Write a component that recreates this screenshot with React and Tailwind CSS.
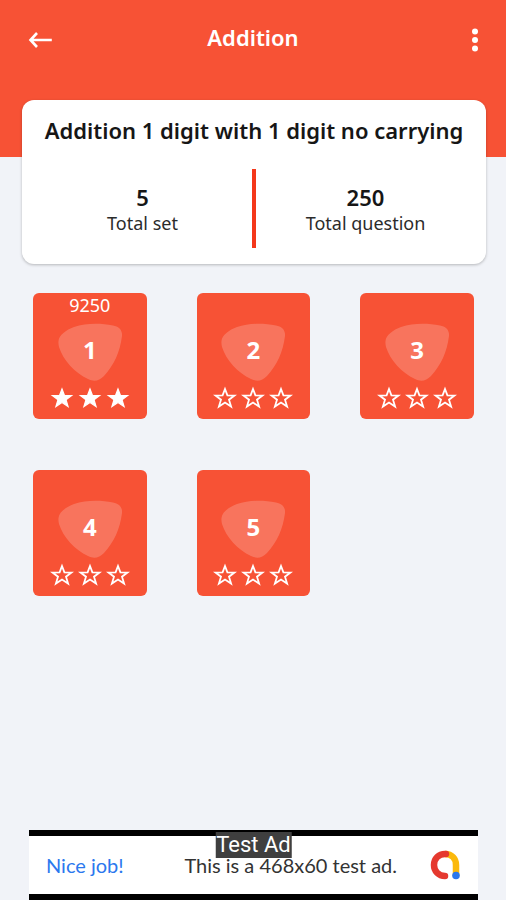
import React from "react";

const STAR_OUTLINE =
  "M12 3 L14.400 9.300 L21.600 9.500 L16 13.700 L18.100 20.600 L12 16.600 L5.900 20.600 L8 13.700 L2.400 9.500 L9.600 9.300 Z";

function Star({ filled }) {
  return (
    <svg viewBox="0 0 24 24" className="size-6" aria-hidden="true">
      <path
        d={STAR_OUTLINE}
        fill={filled ? "#fff" : "none"}
        stroke="#fff"
        strokeWidth={filled ? 1.2 : 1.8}
      />
    </svg>
  );
}

function SetTile({ number, score, stars }) {
  return (
    <button
      type="button"
      className="flex h-[126px] flex-col items-center rounded-md bg-[#f75235] text-white"
    >
      <span className="h-[30px] text-lg leading-6">{score}</span>
      <span className="grid h-[58px] w-16 place-items-center">
        <svg viewBox="0 0 64 58" className="col-start-1 row-start-1 h-[58px] w-16" aria-hidden="true">
          <path
            d="M0.5 18 C1 12 8 7 16 4 C28 0 42 0 55 2.500 C61 3.500 64.500 7 64 13 C62 29 56 42 46 53 C41 58 36 59 30 56 C17 50 5 37 1 24 C0.500 22 0.300 20 0.500 18 Z"
            fill="#fff"
            fillOpacity="0.2"
          />
        </svg>
        <span className="col-start-1 row-start-1 pb-1 text-2xl font-bold">{number}</span>
      </span>
      <span className="flex gap-1 pt-[5px]">
        {[1, 2, 3].map((n) => (
          <Star key={n} filled={n <= stars} />
        ))}
      </span>
    </button>
  );
}

function Stat({ value, label }) {
  return (
    <div className="flex-1 text-center">
      <dd className="text-[22px] leading-7 font-semibold">{value}</dd>
      <dt className="text-lg leading-6 text-[#2b2b2b]">{label}</dt>
    </div>
  );
}

const SETS = [
  { number: 1, score: "9250", stars: 3 },
  { number: 2, stars: 0 },
  { number: 3, stars: 0 },
  { number: 4, stars: 0 },
  { number: 5, stars: 0 },
];

export default function App() {
  return (
    <div className="flex min-h-screen flex-col bg-[#f1f3f8] font-['Noto_Sans',sans-serif] text-[#161616]">
      <header className="h-[157px] bg-[#f75235] px-7 pt-6 text-white">
        <div className="flex h-8 items-center justify-between">
          <button type="button" aria-label="Back" className="h-6 w-6">
            <svg viewBox="0 0 24 24" className="size-6" fill="none" stroke="#fff" strokeWidth="2.6" aria-hidden="true">
              <path d="M23.800 12 H3 M9 5 L2.500 12 L9 19" />
            </svg>
          </button>
          <h1 className="pb-1.5 text-[22px] leading-7 font-semibold">Addition</h1>
          <button type="button" aria-label="More options" className="flex h-6 w-6 justify-end">
            <svg viewBox="0 0 6 24" className="h-6 w-[6px]" fill="#fff" aria-hidden="true">
              <circle cx="3" cy="3.500" r="3" />
              <circle cx="3" cy="12" r="3" />
              <circle cx="3" cy="20.500" r="3" />
            </svg>
          </button>
        </div>
      </header>

      <main className="-mt-[57px] flex-1">
        <section className="mr-5 ml-[22px] h-[164px] rounded-xl bg-white pt-[14px] shadow-[0_1px_3px_rgba(0,0,0,0.25)]">
          <h2 className="text-center text-[22px] leading-8 font-semibold whitespace-nowrap">
            Addition 1 digit with 1 digit no carrying
          </h2>
          <dl className="flex items-center px-[11px] pt-[23px]">
            <Stat value="5" label="Total set" />
            <div className="h-[79px] w-1 bg-[#f4371a]" />
            <Stat value="250" label="Total question" />
          </dl>
        </section>

        <section className="mt-[29px] grid grid-cols-3 gap-x-[50px] gap-y-[51px] pr-8 pl-[33px]">
          {SETS.map((s) => (
            <SetTile key={s.number} {...s} />
          ))}
        </section>
      </main>

      <aside className="relative mr-7 ml-[29px] flex h-[70px] items-center border-y-[6px] border-black bg-white pr-[18px] pl-[17px] font-[Lato,sans-serif] text-xl">
        <a href="#ad" className="text-[#2b78ee]">Nice job!</a>
        <p className="ml-auto pr-[33px] text-[#333]">This is a 468x60 test ad.</p>
        <svg viewBox="0 0 30 30" className="h-[30px] w-[30px]" fill="none" strokeWidth="6.500" aria-hidden="true">
          <path d="M15 4 C22 4 26 9 26 15 V26" stroke="#fbb90c" />
          <path d="M16 4 C8.500 3.500 4 9 4 15 C4 21 8.500 26 15 26" stroke="#e5392f" strokeLinecap="round" />
          <circle cx="26" cy="25.500" r="3.800" fill="#2b78ee" />
        </svg>
        <span className="absolute -top-1 left-1/2 -translate-x-1/2 bg-[#3f3f3f] px-px font-[Roboto,sans-serif] text-[22px] leading-[26px] whitespace-nowrap text-white">
          Test Ad
        </span>
      </aside>
    </div>
  );
}
